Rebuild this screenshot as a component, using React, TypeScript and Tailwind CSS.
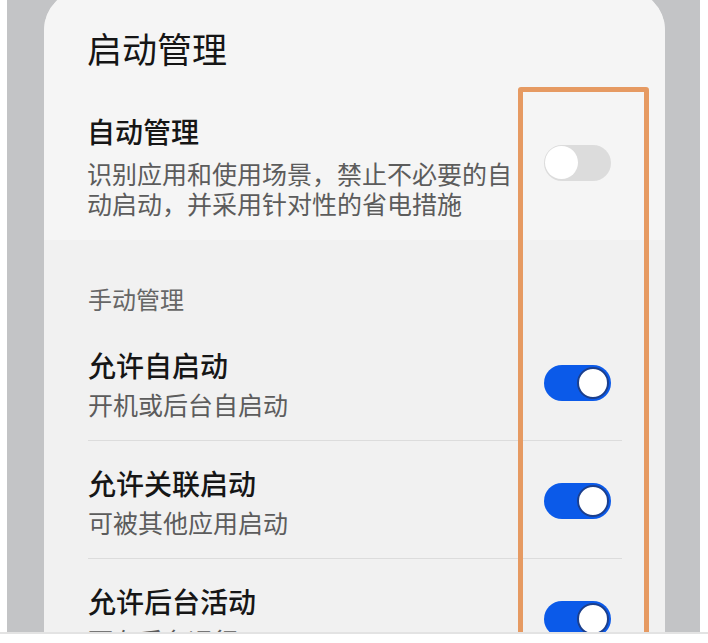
const ITEMS = [
  { title: '允许自启动', sub: '开机或后台自启动' },
  { title: '允许关联启动', sub: '可被其他应用启动' },
  { title: '允许后台活动', sub: '可在后台运行' },
];

function Toggle({ on }: { on: boolean }) {
  if (on) {
    return (
      <div className="w-[67px] h-[36px] rounded-full bg-[#0b5ae9] flex items-center justify-end pr-[2px] shrink-0">
        <div className="w-[32px] h-[32px] rounded-full bg-white border-2 border-[#1c3f8c]" />
      </div>
    );
  }
  return (
    <div className="w-[67px] h-[36px] rounded-full bg-[#dcdcdc] flex items-center pl-[1px] shrink-0">
      <div className="w-[33px] h-[33px] rounded-full bg-white" />
    </div>
  );
}

export default function App() {
  return (
    <div
      className="w-[708px] h-[643px] bg-white overflow-hidden"
      style={{ fontFamily: '"Noto Sans CJK SC", "Noto Sans", sans-serif' }}
    >
      <div className="relative ml-[7px] w-[693px] h-[632px] bg-[#c3c4c6] overflow-hidden pl-[37px] pr-[35px]">
        <div className="mt-[-10px] h-[660px] rounded-t-[40px] bg-[#f1f1f1] overflow-hidden">
          {/* Top block */}
          <div className="bg-[#f5f5f5] pt-[40px] pb-[22px] pl-[43px] pr-[43px]">
            <div className="text-[35px] leading-[35px] text-[#151515]">启动管理</div>
            <div className="mt-[52px] flex items-center justify-between">
              <div className="w-[432px]">
                <div className="text-[28px] leading-[28px] font-medium text-[#161616]">自动管理</div>
                <div className="mt-[13px] text-[25px] leading-[30px] text-[#5c5c5c]">
                  识别应用和使用场景，禁止不必要的自动启动，并采用针对性的省电措施
                </div>
              </div>
              <div className="mr-[11px] mb-[10px]">
                <Toggle on={false} />
              </div>
            </div>
          </div>

          {/* Manual management */}
          <div className="pl-[44px] pr-[43px]">
            <div className="mt-[47px] mb-[12px] text-[24px] leading-[24px] text-[#666666]">手动管理</div>
            {ITEMS.map((it, i) => (
              <div
                key={it.title}
                className={
                  'flex items-center justify-between pt-[28px] pb-[23px] ' +
                  (i < ITEMS.length - 1 ? 'border-b border-[#dcdcdc]' : '')
                }
              >
                <div>
                  <div className="text-[28px] leading-[28px] font-medium text-[#161616]">{it.title}</div>
                  <div className="mt-[13px] text-[25px] leading-[25px] text-[#5c5c5c]">{it.sub}</div>
                </div>
                <div className="mr-[11px] mb-[3px]">
                  <Toggle on />
                </div>
              </div>
            ))}
          </div>
        </div>

        {/* Highlight box */}
        <div className="absolute left-[511px] top-[87px] w-[131px] h-[600px] border-[5px] border-[#e69a62] rounded-[3px]" />
      </div>
      <div className="h-[2px] bg-[#e3e3e3]" />
    </div>
  );
}
